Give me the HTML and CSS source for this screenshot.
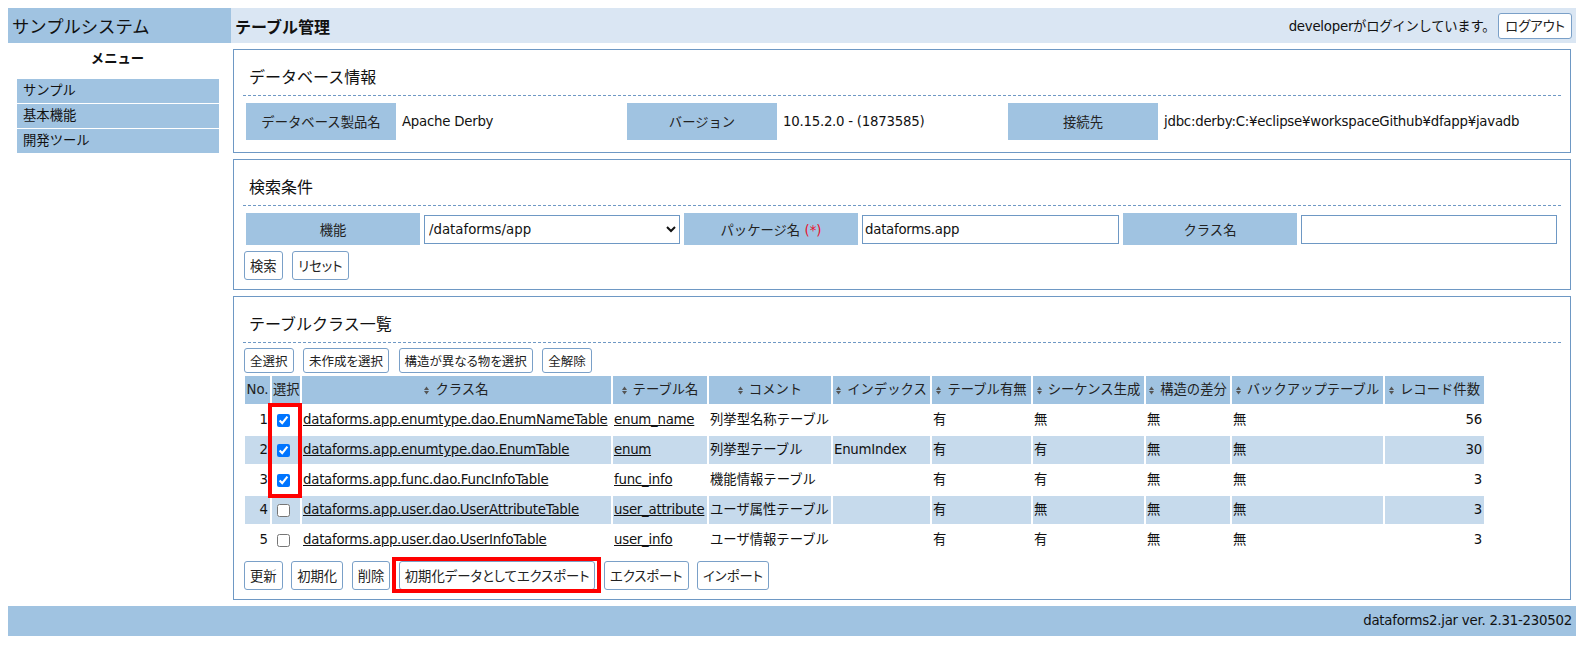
FILE: index.html
```html
<!DOCTYPE html>
<html lang="ja">
<head>
<meta charset="utf-8">
<title>テーブル管理</title>
<link rel="stylesheet" href="styles.css">
</head>
<body>
<header class="topbar">
  <div class="sys-name">サンプルシステム</div>
  <div class="page-bar">
    <h1 class="page-title">テーブル管理</h1>
    <div class="login-info"><span class="login-text lat">developerがログインしています。</span><button class="btn btn-logout">ログアウト</button></div>
  </div>
</header>
<div class="layout">
  <nav class="side">
    <div class="menu-title">メニュー</div>
    <ul class="menu">
      <li class="menu-item">サンプル</li>
      <li class="menu-item">基本機能</li>
      <li class="menu-item">開発ツール</li>
    </ul>
  </nav>
  <main class="main">
    <section class="panel panel-info">
      <h2 class="panel-title">データベース情報</h2>
      <div class="info-grid">
        <div class="label">データベース製品名</div><div class="value lat">Apache Derby</div>
        <div class="label">バージョン</div><div class="value lat">10.15.2.0 - (1873585)</div>
        <div class="label">接続先</div><div class="value lat">jdbc:derby:C:¥eclipse¥workspaceGithub¥dfapp¥javadb</div>
      </div>
    </section>
    <section class="panel panel-search">
      <h2 class="panel-title">検索条件</h2>
      <div class="search-grid">
        <div class="label">機能</div>
        <select class="field field-select"><option>/dataforms/app</option></select>
        <div class="label"><span>パッケージ名 <span class="req">(*)</span></span></div>
        <input class="field field-text lat" type="text" value="dataforms.app">
        <div class="label">クラス名</div>
        <input class="field field-text lat" type="text" value="">
      </div>
      <div class="btn-row btn-row-search">
        <button class="btn">検索</button>
        <button class="btn">リセット</button>
      </div>
    </section>
    <section class="panel panel-list">
      <h2 class="panel-title">テーブルクラス一覧</h2>
      <div class="btn-row btn-row-tools">
        <button class="btn btn-sm">全選択</button>
        <button class="btn btn-sm">未作成を選択</button>
        <button class="btn btn-sm">構造が異なる物を選択</button>
        <button class="btn btn-sm">全解除</button>
      </div>
      <div class="table-wrap">
        <table class="list">
          <thead>
            <tr>
              <th class="w-no">No.</th>
              <th class="w-sel">選択</th>
              <th class="w-class"><svg class="sort" viewBox="0 0 5 9" width="5" height="9"><polygon points="0,4 2.5,0.5 5,4"/><polygon points="0,5 2.5,8.5 5,5"/></svg>クラス名</th>
              <th class="w-table"><svg class="sort" viewBox="0 0 5 9" width="5" height="9"><polygon points="0,4 2.5,0.5 5,4"/><polygon points="0,5 2.5,8.5 5,5"/></svg>テーブル名</th>
              <th class="w-comment"><svg class="sort" viewBox="0 0 5 9" width="5" height="9"><polygon points="0,4 2.5,0.5 5,4"/><polygon points="0,5 2.5,8.5 5,5"/></svg>コメント</th>
              <th class="w-index"><svg class="sort" viewBox="0 0 5 9" width="5" height="9"><polygon points="0,4 2.5,0.5 5,4"/><polygon points="0,5 2.5,8.5 5,5"/></svg>インデックス</th>
              <th class="w-exists"><svg class="sort" viewBox="0 0 5 9" width="5" height="9"><polygon points="0,4 2.5,0.5 5,4"/><polygon points="0,5 2.5,8.5 5,5"/></svg>テーブル有無</th>
              <th class="w-seq"><svg class="sort" viewBox="0 0 5 9" width="5" height="9"><polygon points="0,4 2.5,0.5 5,4"/><polygon points="0,5 2.5,8.5 5,5"/></svg>シーケンス生成</th>
              <th class="w-diff"><svg class="sort" viewBox="0 0 5 9" width="5" height="9"><polygon points="0,4 2.5,0.5 5,4"/><polygon points="0,5 2.5,8.5 5,5"/></svg>構造の差分</th>
              <th class="w-backup"><svg class="sort" viewBox="0 0 5 9" width="5" height="9"><polygon points="0,4 2.5,0.5 5,4"/><polygon points="0,5 2.5,8.5 5,5"/></svg>バックアップテーブル</th>
              <th class="w-count"><svg class="sort" viewBox="0 0 5 9" width="5" height="9"><polygon points="0,4 2.5,0.5 5,4"/><polygon points="0,5 2.5,8.5 5,5"/></svg>レコード件数</th>
            </tr>
          </thead>
          <tbody>
            <tr>
              <td class="num">1</td>
              <td class="sel"><input type="checkbox" checked></td>
              <td><a class="link" href="#">dataforms.app.enumtype.dao.EnumNameTable</a></td>
              <td><a class="link" href="#">enum_name</a></td>
              <td>列挙型名称テーブル</td>
              <td class="lat"></td>
              <td>有</td>
              <td>無</td>
              <td>無</td>
              <td>無</td>
              <td class="num lat">56</td>
            </tr>
            <tr>
              <td class="num">2</td>
              <td class="sel"><input type="checkbox" checked></td>
              <td><a class="link" href="#">dataforms.app.enumtype.dao.EnumTable</a></td>
              <td><a class="link" href="#">enum</a></td>
              <td>列挙型テーブル</td>
              <td class="lat">EnumIndex</td>
              <td>有</td>
              <td>有</td>
              <td>無</td>
              <td>無</td>
              <td class="num lat">30</td>
            </tr>
            <tr>
              <td class="num">3</td>
              <td class="sel"><input type="checkbox" checked></td>
              <td><a class="link" href="#">dataforms.app.func.dao.FuncInfoTable</a></td>
              <td><a class="link" href="#">func_info</a></td>
              <td>機能情報テーブル</td>
              <td class="lat"></td>
              <td>有</td>
              <td>有</td>
              <td>無</td>
              <td>無</td>
              <td class="num lat">3</td>
            </tr>
            <tr>
              <td class="num">4</td>
              <td class="sel"><input type="checkbox"></td>
              <td><a class="link" href="#">dataforms.app.user.dao.UserAttributeTable</a></td>
              <td><a class="link" href="#">user_attribute</a></td>
              <td>ユーザ属性テーブル</td>
              <td class="lat"></td>
              <td>有</td>
              <td>無</td>
              <td>無</td>
              <td>無</td>
              <td class="num lat">3</td>
            </tr>
            <tr>
              <td class="num">5</td>
              <td class="sel"><input type="checkbox"></td>
              <td><a class="link" href="#">dataforms.app.user.dao.UserInfoTable</a></td>
              <td><a class="link" href="#">user_info</a></td>
              <td>ユーザ情報テーブル</td>
              <td class="lat"></td>
              <td>有</td>
              <td>有</td>
              <td>無</td>
              <td>無</td>
              <td class="num lat">3</td>
            </tr>
          </tbody>
        </table>
        <div class="mark-col"></div>
      </div>
      <div class="btn-row btn-row-bottom">
        <button class="btn">更新</button>
        <button class="btn">初期化</button>
        <button class="btn">削除</button>
        <span class="marked"><button class="btn">初期化データとしてエクスポート</button></span>
        <button class="btn">エクスポート</button>
        <button class="btn">インポート</button>
      </div>
    </section>
  </main>
</div>
<footer class="footer lat">dataforms2.jar ver. 2.31-230502</footer>
</body>
</html>
```

FILE: styles.css
```css
* {
  box-sizing: border-box;
}

body {
  margin: 8px;
  font-family: "DejaVu Sans", "Noto Sans CJK JP", sans-serif;
  font-size: 13.33px;
  color: #111;
  background: #fff;
}

.lat {
  letter-spacing: -0.25px;
}

/* top bar */
.topbar {
  display: flex;
  height: 35px;
}

.sys-name {
  flex: none;
  width: 223px;
  background: #a0c3e1;
  font-family: "Noto Sans CJK JP", sans-serif;
  font-size: 17.33px;
  line-height: 35px;
  padding-left: 4px;
  color: #111;
}

.page-bar {
  flex: 1;
  background: #dae6f3;
  display: flex;
  align-items: center;
  justify-content: space-between;
  padding: 0 4px 0 4px;
}

.page-title {
  margin: 0;
  font-size: 16px;
  font-weight: bold;
  line-height: 22px;
  font-family: "Noto Sans CJK JP", sans-serif;
}

.login-info {
  display: flex;
  align-items: center;
  gap: 3px;
}

/* layout */
.layout {
  display: flex;
  align-items: flex-start;
}

.side {
  flex: none;
  width: 223px;
  padding-right: 4px;
}

.menu-title {
  margin: 6px 0 10px;
  line-height: 20px;
  text-align: center;
  font-weight: bold;
}

.menu {
  list-style: none;
  margin: 0 8px 0 9px;
  padding: 0;
}

.menu-item {
  height: 24px;
  line-height: 24px;
  background: #a0c3e1;
  margin-bottom: 1px;
  padding-left: 6px;
}

.main {
  flex: 1;
  min-width: 0;
  margin: 0 5px 0 2px;
}

/* panels */
.panel {
  border: 1px solid #6e98c4;
  margin-top: 6px;
  padding: 0 9px 12px;
}

.panel-search,
.panel-list {
  padding-bottom: 9px;
}

.panel-title {
  margin: 0;
  font-size: 16px;
  font-weight: normal;
  line-height: 22px;
  padding: 17px 0 6px 6px;
  border-bottom: 1px dashed #6e98c4;
  color: #111;
}

.label {
  background: #a0c3e1;
  display: flex;
  align-items: center;
  justify-content: center;
  color: #222;
  white-space: pre;
}

.info-grid {
  display: grid;
  grid-template-columns: 150px 231px 150px 231px 150px 1fr;
  height: 37px;
  margin: 7px 0 0 3px;
}

.value {
  display: flex;
  align-items: center;
  padding-left: 6px;
  white-space: nowrap;
}

.search-grid {
  display: grid;
  grid-template-columns: 174px 256px 174px 257px 174px 1fr;
  column-gap: 4px;
  height: 32px;
  margin: 7px 4px 0 3px;
}

.req {
  color: #e8112d;
}

.field {
  align-self: center;
  width: 100%;
  height: 29px;
  border: 1px solid #6e98c4;
  background: #fff;
  font-family: "DejaVu Sans", "Noto Sans CJK JP", sans-serif;
  font-size: 13.33px;
  color: #111;
  margin: 0;
}

.field-text {
  padding: 1px 2px;
}

/* buttons */
.btn-row {
  display: flex;
  align-items: center;
  gap: 9.5px;
  padding-left: 1px;
}

.btn-row-search {
  margin-top: 6px;
}

.btn-row-tools {
  margin-top: 5px;
}

.btn-row-bottom {
  margin-top: 5px;
  gap: 8.5px;
}

.btn {
  font-family: "Noto Sans CJK JP", sans-serif;
  font-feature-settings: "palt";
  font-size: 13.33px;
  line-height: 19px;
  padding: 4px 5px;
  border: 1px solid #7aa0c8;
  border-radius: 3px;
  background: #fff;
  color: #222;
  margin: 0;
}

.btn-sm {
  font-size: 12.5px;
  padding: 2px 5px;
}

.btn-logout {
  line-height: 18px;
  padding: 3px 6px;
}

.marked {
  position: relative;
  display: flex;
}

.marked::after {
  content: "";
  position: absolute;
  top: -4px;
  left: -7px;
  right: -6px;
  bottom: -3px;
  border: 4px solid #f00;
  pointer-events: none;
}

/* table */
.table-wrap {
  position: relative;
  margin-top: 1px;
}

.list {
  border-collapse: separate;
  border-spacing: 2px;
  table-layout: fixed;
  width: 1243px;
}

.list th {
  background: #a0c3e1;
  height: 28px;
  padding: 0 1px;
  font-weight: normal;
  color: #222;
  white-space: nowrap;
  overflow: hidden;
  line-height: 20px;
}

.list td {
  height: 28px;
  padding: 0 1px;
  white-space: nowrap;
  overflow: hidden;
  line-height: 20px;
  vertical-align: middle;
}

.list tbody tr:nth-child(even) td {
  background: #c6daec;
}

.list td.num {
  text-align: right;
  padding-right: 2px;
}

.list td.sel input {
  vertical-align: middle;
  margin: 3px 3px 3px 4px;
}

.sort {
  fill: #555;
  margin-right: 6px;
  vertical-align: -1px;
}

.link {
  color: #111;
  text-decoration: underline;
  letter-spacing: -0.25px;
}

.w-no { width: 25px; }
.w-sel { width: 28px; }
.w-class { width: 309px; }
.w-table { width: 94px; }
.w-comment { width: 122px; }
.w-index { width: 97px; }
.w-exists { width: 99px; }
.w-seq { width: 111px; }
.w-diff { width: 84px; }
.w-backup { width: 151px; }
.w-count { width: 99px; }

.mark-col {
  position: absolute;
  left: 25px;
  top: 29px;
  width: 34px;
  height: 95px;
  border: 4px solid #f00;
  pointer-events: none;
}

/* footer */
.footer {
  margin-top: 6px;
  height: 30px;
  line-height: 30px;
  background: #a0c3e1;
  text-align: right;
  padding-right: 4px;
}
```
